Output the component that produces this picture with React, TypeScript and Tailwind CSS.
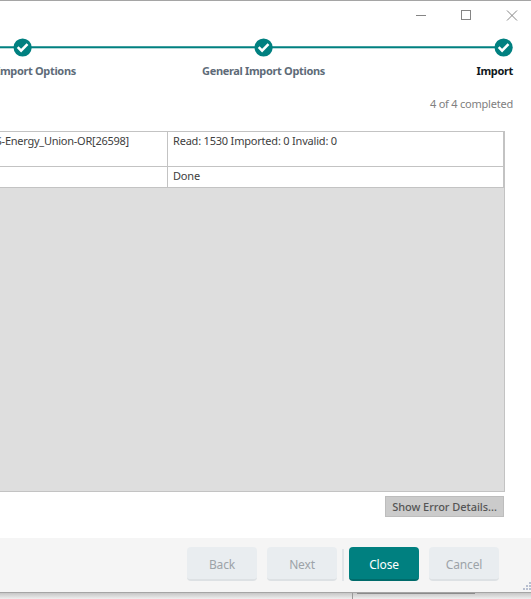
import React from 'react';

type StepState = 'done' | 'current';

interface Step {
  label: string;
  state: StepState;
}

const steps: Step[] = [
  { label: 'Import Options', state: 'done' },
  { label: 'General Import Options', state: 'done' },
  { label: 'Import', state: 'current' },
];

function StepDot() {
  return (
    <svg className="relative -mx-px block h-[19px] w-[21px] shrink-0" viewBox="0 0 21 19">
      <circle cx="10.6" cy="9.5" r="9.1" fill="#008080" />
      <path d="M5.7 9.2 L9.1 12.6 L15.5 6.2" fill="none" stroke="#fff" strokeWidth="2.6" />
    </svg>
  );
}

function Connector() {
  return (
    <div className="-mx-px flex flex-1 flex-col">
      <div className="h-px bg-[#40a0a0]" />
      <div className="h-px bg-[#008080]" />
      <div className="h-px bg-[#b5dada]" />
    </div>
  );
}

function TitleBar() {
  return (
    <div className="flex h-[37px] items-start justify-end pr-[13px] pt-[9px]">
      <svg width="103" height="11" viewBox="0 0 103 11" fill="none" stroke="#858585" strokeWidth="1">
        <path d="M1 5.5H11" />
        <rect x="46.5" y="0.5" width="9" height="9" />
        <path d="M92 0.5L102 10.5M102 0.5L92 10.5" />
      </svg>
    </div>
  );
}

function Stepper() {
  return (
    <div>
      <div className="flex items-center">
        <div className="flex w-[13px]">
          <Connector />
        </div>
        <StepDot />
        <Connector />
        <StepDot />
        <Connector />
        <StepDot />
        <div className="w-[18px]" />
      </div>
      <div className="mt-[6px] grid h-4 grid-cols-[143px_241px_129px] text-[11px] font-bold leading-4 tracking-[-0.34px] text-[#5e6b78]">
        <span className="-ml-[4px] whitespace-nowrap">{steps[0].label}</span>
        <span className="whitespace-nowrap text-center">{steps[1].label}</span>
        <span className="whitespace-nowrap text-right text-[#101820]">{steps[2].label}</span>
      </div>
    </div>
  );
}

interface WizardButtonProps {
  label: string;
  primary?: boolean;
}

function WizardButton({ label, primary }: WizardButtonProps) {
  return (
    <button
      disabled={!primary}
      className={`h-[34px] w-[70px] rounded-[4px] border-b-2 pt-px text-[12px] leading-[33px] tracking-[-0.15px] ${
        primary
          ? 'border-[#006b6b] bg-[#008080] text-white'
          : 'border-[#dde1e4] bg-[#e9edf0] text-[#9da3a8]'
      }`}
    >
      {label}
    </button>
  );
}

export default function App() {
  return (
    <div className="h-[599px] w-[531px] overflow-hidden bg-[#ececec] font-['Noto_Sans',sans-serif]">
      <div className="flex h-[593px] flex-col border-y border-[#a5a5a5] bg-white">
        <TitleBar />
        <Stepper />

        <div className="mt-[17px] h-4 pr-[18px] text-right text-[11px] leading-4 tracking-[-0.22px] text-[#808080]">
          4 of 4 completed
        </div>

        {/* Import results */}
        <div className="mt-[19px] flex h-[361px] w-[505px] flex-col border-y border-r border-[#c3c3c3] bg-[#dedede] text-[11px] leading-4 tracking-[-0.2px] text-[#404040]">
          <div className="grid h-[35px] grid-cols-[168px_336px] border-b border-[#c3c3c3] bg-white">
            <div className="flex justify-end overflow-hidden whitespace-nowrap border-r border-[#c3c3c3] pr-[38px] pt-px tracking-[-0.25px]">
              S-Energy_Union-OR[26598]
            </div>
            <div className="border-r border-[#c3c3c3] pl-[5px] pt-px">Read: 1530 Imported: 0 Invalid: 0</div>
          </div>
          <div className="grid h-[21px] grid-cols-[168px_336px] border-b border-[#c3c3c3] bg-white">
            <div className="border-r border-[#c3c3c3]" />
            <div className="border-r border-[#c3c3c3] pl-[5px] pt-px">Done</div>
          </div>
        </div>

        <div className="mt-1 flex justify-end pr-[27px]">
          <button className="h-[21px] w-[119px] border border-[#bdbdbd] bg-[#cbcbcb] text-[11px] font-medium leading-[19px] tracking-[-0.05px] text-[#555]">
            Show Error Details...
          </button>
        </div>

        {/* Footer */}
        <div className="relative mt-[21px] flex h-[54px] shrink-0 items-start bg-[#f5f5f5] pl-[187px] pt-[9px]">
          <WizardButton label="Back" />
          <div className="w-[10px]" />
          <WizardButton label="Next" />
          <div className="ml-[5px] mr-[5px] mt-[2px] h-8 w-[2px] bg-[#e1e5e8]" />
          <WizardButton label="Close" primary />
          <div className="w-[10px]" />
          <WizardButton label="Cancel" />
          <svg className="absolute bottom-[2px] right-0" width="9" height="8" viewBox="0 0 9 8" fill="#b8bfd0">
            <path d="M7 0h2v2H7zM4 3h2v2H4zM7 3h2v2H7zM1 6h2v2H1zM4 6h2v2H4zM7 6h2v2H7z" />
          </svg>
        </div>
      </div>

      {/* Edge of the window behind */}
      <div className="flex h-[6px] bg-linear-to-b from-[#c6c6c6] to-[#efefef]">
        <div className="w-[353px] border-r border-[#999]" />
        <div className="ml-[4px] h-px w-[118px] bg-[#8b8b8b]" />
      </div>
    </div>
  );
}
